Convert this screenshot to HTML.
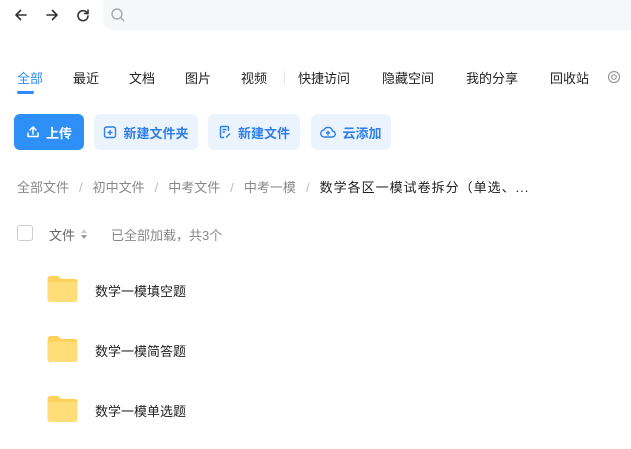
<!DOCTYPE html>
<html><head><meta charset="utf-8"><style>
*{margin:0;padding:0;box-sizing:border-box}
body{width:631px;height:449px;background:#fff;font-family:"Liberation Sans","Noto Sans CJK SC",sans-serif;position:relative;overflow:hidden;color:#222}
.a{position:absolute;white-space:nowrap}
.tab{position:absolute;top:68px;font-size:13px;color:#222}
.btn{position:absolute;top:114px;height:36px;border-radius:6px;background:#eaf3fe;color:#2f7fe6;font-size:13px;font-weight:bold;display:flex;align-items:center;justify-content:center;gap:6px}
.bc{position:absolute;top:177px;font-size:13px;color:#888}
.bc i{font-style:normal;color:#bbb;margin:0 10px}
.fold{position:absolute;left:47px;width:31px;height:26px}
.fn{position:absolute;left:95px;font-size:13px;color:#222}
</style></head><body>
<svg class="a" style="left:13px;top:7px" width="16" height="16" viewBox="0 0 16 16" fill="none" stroke="#333" stroke-width="1.6" stroke-linecap="round" stroke-linejoin="round"><path d="M13 8H3M7.5 3.5 3 8l4.5 4.5"/></svg>
<svg class="a" style="left:44px;top:7px" width="16" height="16" viewBox="0 0 16 16" fill="none" stroke="#333" stroke-width="1.6" stroke-linecap="round" stroke-linejoin="round"><path d="M3 8h10M8.5 3.5 13 8l-4.5 4.5"/></svg>
<svg class="a" style="left:75px;top:7px" width="16" height="16" viewBox="0 0 16 16" fill="none" stroke="#333" stroke-width="1.6" stroke-linecap="round"><path d="M12.5 6.5A5 5 0 1 0 13 9"/><path d="M13 3v3.5H9.5"/></svg>
<div class="a" style="left:103px;top:-6px;width:540px;height:36px;background:#f6f7f9;border-radius:10px"></div>
<svg class="a" style="left:110px;top:7px" width="16" height="16" viewBox="0 0 16 16" fill="none" stroke="#aaa" stroke-width="1.4"><circle cx="7" cy="7" r="5"/><path d="M11 11l3 3"/></svg>

<div class="tab" style="left:17px;color:#2f8cff">全部</div>
<div class="a" style="left:17px;top:91px;width:17px;height:3px;border-radius:2px;background:#2f8cff"></div>
<div class="tab" style="left:73px">最近</div>
<div class="tab" style="left:129px">文档</div>
<div class="tab" style="left:185px">图片</div>
<div class="tab" style="left:241px">视频</div>
<div class="a" style="left:284px;top:71px;width:1px;height:13px;background:#e5e5e5"></div>
<div class="tab" style="left:298px">快捷访问</div>
<div class="tab" style="left:382px">隐藏空间</div>
<div class="tab" style="left:466px">我的分享</div>
<div class="tab" style="left:550px">回收站</div>
<svg class="a" style="left:607px;top:70px" width="14" height="14" viewBox="0 0 14 14" fill="none" stroke="#999" stroke-width="1.2"><circle cx="7" cy="7" r="5.5"/><circle cx="7" cy="7" r="2.3"/></svg>

<div class="btn" style="left:14px;width:70px;background:#2e8ff7;color:#fff"><svg width="14" height="14" viewBox="0 0 14 14" fill="none" stroke="#fff" stroke-width="1.5" stroke-linecap="round" stroke-linejoin="round"><path d="M7 9V2M4 5l3-3 3 3M2 8v3.5h10V8"/></svg>上传</div>
<div class="btn" style="left:94px;width:104px"><svg width="14" height="14" viewBox="0 0 14 14" fill="none" stroke="#2f7fe6" stroke-width="1.4"><rect x="1.5" y="2" width="11" height="10.5" rx="2"/><path d="M7 5v5M4.5 7.5h5"/></svg>新建文件夹</div>
<div class="btn" style="left:208px;width:92px"><svg width="14" height="14" viewBox="0 0 14 14" fill="none" stroke="#2f7fe6" stroke-width="1.4"><path d="M10.5 6V2.5a1 1 0 0 0-1-1h-6a1 1 0 0 0-1 1v9a1 1 0 0 0 1 1H6M4.5 4.5h4M4.5 7h2.5M8 12.5l4-4"/></svg>新建文件</div>
<div class="btn" style="left:311px;width:80px"><svg width="16" height="14" viewBox="0 0 16 14" fill="none" stroke="#2f7fe6" stroke-width="1.4" stroke-linecap="round"><path d="M4.5 12A3.5 3.5 0 0 1 4 5a4.5 4.5 0 0 1 8.5 1A3 3 0 0 1 12 12z"/><path d="M8 10V6.5M6.5 8 8 6.5 9.5 8"/></svg>云添加</div>

<div class="bc" style="left:17px">全部文件<i>/</i>初中文件<i>/</i>中考文件<i>/</i>中考一模<i>/</i><span style="color:#222;letter-spacing:1px">数学各区一模试卷拆分（单选、...</span></div>

<div class="a" style="left:17px;top:225px;width:16px;height:16px;border:1px solid #ccc;border-radius:3px"></div>
<div class="a" style="left:49px;top:225px;font-size:13px;color:#666">文件</div>
<svg class="a" style="left:80px;top:228px" width="8" height="12" viewBox="0 0 8 12"><path d="M4 1 7 5H1z" fill="#ccc"/><path d="M4 11 1 7h6z" fill="#999"/></svg>
<div class="a" style="left:111px;top:225px;font-size:13px;color:#888">已全部加载，共3个</div>

<svg class="fold" style="top:276px" viewBox="0 0 31 27"><path d="M0 3a3 3 0 0 1 3-3h8l3 3h14a3 3 0 0 1 3 3v18a3 3 0 0 1-3 3H3a3 3 0 0 1-3-3z" fill="#fdd25c"/><rect x="0" y="6" width="31" height="21" rx="3" fill="#ffde7a"/></svg>
<div class="fn" style="top:281px">数学一模填空题</div>
<svg class="fold" style="top:336px" viewBox="0 0 31 27"><path d="M0 3a3 3 0 0 1 3-3h8l3 3h14a3 3 0 0 1 3 3v18a3 3 0 0 1-3 3H3a3 3 0 0 1-3-3z" fill="#fdd25c"/><rect x="0" y="6" width="31" height="21" rx="3" fill="#ffde7a"/></svg>
<div class="fn" style="top:341px">数学一模简答题</div>
<svg class="fold" style="top:396px" viewBox="0 0 31 27"><path d="M0 3a3 3 0 0 1 3-3h8l3 3h14a3 3 0 0 1 3 3v18a3 3 0 0 1-3 3H3a3 3 0 0 1-3-3z" fill="#fdd25c"/><rect x="0" y="6" width="31" height="21" rx="3" fill="#ffde7a"/></svg>
<div class="fn" style="top:401px">数学一模单选题</div>
</body></html>
